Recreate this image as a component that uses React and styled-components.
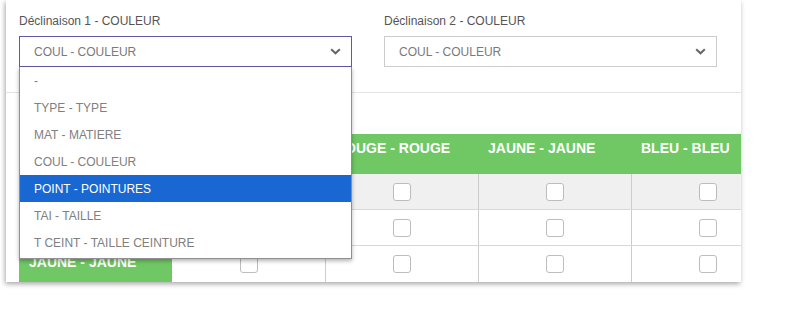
import styled, { createGlobalStyle } from "styled-components";

const GlobalStyle = createGlobalStyle`
	html, body {
		margin: 0;
		padding: 0;
		background: #ffffff;
		font-family: "Liberation Sans", Arial, sans-serif;
	}
`;

const options = [
	"-",
	"TYPE - TYPE",
	"MAT - MATIERE",
	"COUL - COULEUR",
	"POINT - POINTURES",
	"TAI - TAILLE",
	"T CEINT - TAILLE CEINTURE",
];

const columns = ["", "BLANC - BLANC", "ROUGE - ROUGE", "JAUNE - JAUNE", "BLEU - BLEU"];
const rows = ["BLEU - BLEU", "ROUGE - ROUGE", "JAUNE - JAUNE"];

const Chevron = () => (
	<svg width="11" height="7" viewBox="0 0 11 7">
		<path d="M1.2 1.2 L5.5 5.3 L9.8 1.2" fill="none" stroke="#666" strokeWidth="2" />
	</svg>
);

const App = () => {
	return (
		<>
			<GlobalStyle />
			<Page>
				<Card>
					<Fields>
						<Field>
							<Label>Déclinaison 1 - COULEUR</Label>
							<SelectWrap>
								<Select $focused>
									<span>COUL - COULEUR</span>
									<Chevron />
								</Select>
								<OptionList>
									{options.map((opt) => (
										<Option key={opt} $active={opt === "POINT - POINTURES"}>
											{opt}
										</Option>
									))}
								</OptionList>
							</SelectWrap>
						</Field>
						<Field>
							<Label>Déclinaison 2 - COULEUR</Label>
							<SelectWrap>
								<Select>
									<span>COUL - COULEUR</span>
									<Chevron />
								</Select>
							</SelectWrap>
						</Field>
					</Fields>
					<Separator />
					<Grid>
						<HeadRow>
							{columns.map((col, i) => (
								<HeadCell key={i}>{col}</HeadCell>
							))}
						</HeadRow>
						{rows.map((row, r) => (
							<BodyRow key={row} $striped={r === 0} $last={r === rows.length - 1}>
								<RowLabel>{row}</RowLabel>
								{columns.slice(1).map((col, c) => (
									<Cell key={c} $first={c === 0}>
										<Check />
									</Cell>
								))}
							</BodyRow>
						))}
					</Grid>
				</Card>
			</Page>
		</>
	);
};

export default App;

const Page = styled.div`
	width: 785px;
	height: 317px;
	overflow: hidden;
`;

const Card = styled.div`
	margin-left: 6px;
	width: 735px;
	background: #ffffff;
	box-shadow: -1px 2px 5px rgba(0, 0, 0, 0.35);
	overflow: hidden;
	position: relative;
`;

const Fields = styled.div`
	display: flex;
	gap: 32px;
	padding: 14px 13px 0;
	position: relative;
	z-index: 2;
`;

const Field = styled.div`
	width: 333px;
	display: flex;
	flex-direction: column;
`;

const Label = styled.div`
	font-size: 12px;
	line-height: 14px;
	color: #555;
	margin-bottom: 8px;
`;

const SelectWrap = styled.div`
	position: relative;
`;

const Select = styled.div`
	box-sizing: border-box;
	height: 31px;
	display: flex;
	align-items: center;
	justify-content: space-between;
	padding: 0 10px 0 14px;
	border: 1px solid ${(p) => (p.$focused ? "#6656a6" : "#cccccc")};
	font-size: 12px;
	color: #7a7a7a;
	background: #fff;
`;

const OptionList = styled.div`
	position: absolute;
	top: 100%;
	left: 0;
	width: 333px;
	box-sizing: border-box;
	border: 1px solid #8f8f8f;
	border-top: none;
	background: #fff;
	box-shadow: 0 2px 4px rgba(0, 0, 0, 0.3);
	padding-bottom: 2px;
`;

const Option = styled.div`
	height: 27px;
	display: flex;
	align-items: center;
	padding-left: 14px;
	font-size: 12px;
	color: ${(p) => (p.$active ? "#ffffff" : "#808080")};
	background: ${(p) => (p.$active ? "#1967d2" : "transparent")};
`;

const Separator = styled.div`
	height: 1px;
	background: #e4e4e4;
	margin-top: 25px;
`;

const Grid = styled.div`
	margin: 41px 0 0 13px;
	width: 765px;
`;

const HeadRow = styled.div`
	display: grid;
	grid-template-columns: repeat(5, 153px);
	height: 40px;
	background: #6fc864;
`;

const HeadCell = styled.div`
	padding: 6px 10px 0;
	font-size: 14px;
	line-height: 16px;
	font-weight: bold;
	color: #ffffff;
	white-space: nowrap;
`;

const BodyRow = styled.div`
	display: grid;
	grid-template-columns: repeat(5, 153px);
	height: ${(p) => (p.$last ? "36px" : "36px")};
	background: ${(p) => (p.$striped ? "#f0f0f0" : "#ffffff")};
	border-bottom: ${(p) => (p.$last ? "none" : "1px solid #d8d8d8")};
	box-sizing: border-box;
`;

const RowLabel = styled.div`
	background: #6fc864;
	color: #ffffff;
	font-size: 14px;
	line-height: 16px;
	font-weight: bold;
	padding: 8px 10px 0;
	white-space: nowrap;
`;

const Cell = styled.div`
	display: flex;
	align-items: center;
	justify-content: center;
	border-left: ${(p) => (p.$first ? "none" : "1px solid #cccccc")};
`;

const Check = styled.div`
	width: 16px;
	height: 16px;
	border: 1.5px solid #bdbdbd;
	border-radius: 3px;
	background: #ffffff;
`;
